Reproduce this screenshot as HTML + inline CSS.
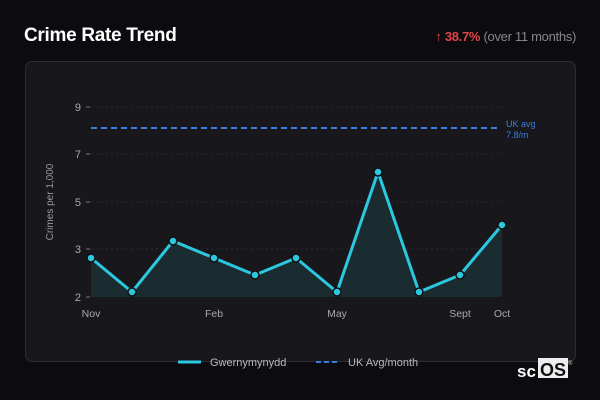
<!DOCTYPE html>
<html><head><style>
body{margin:0;width:600px;height:400px;background:#0c0b10;font-family:"Liberation Sans",sans-serif;overflow:hidden;position:relative}
.t{position:absolute;left:24px;top:25px;color:#fff;font-weight:bold;font-size:19px;letter-spacing:-0.3px}
.r{position:absolute;right:24px;top:29px;font-size:13px;color:#888;letter-spacing:-0.3px}
.r b{color:#e04545}
.card{position:absolute;left:25px;top:61px;width:549px;height:299px;background:#17171c;border:1px solid #2c2c33;border-radius:7px}
svg{position:absolute;left:0;top:0}
</style></head><body>
<div class="t">Crime Rate Trend</div>
<div class="r"><b>↑ 38.7%</b> (over 11 months)</div>
<div class="card"></div>
<svg width="600" height="400" font-family="Liberation Sans, sans-serif">
<g stroke="#2a2a30" stroke-dasharray="2,3" stroke-width="1">
<line x1="91" x2="502" y1="107" y2="107"/><line x1="91" x2="502" y1="154" y2="154"/><line x1="91" x2="502" y1="202" y2="202"/><line x1="91" x2="502" y1="249" y2="249"/></g>
<g stroke="#777"><line x1="86" x2="90" y1="107" y2="107"/><line x1="86" x2="90" y1="154" y2="154"/><line x1="86" x2="90" y1="202" y2="202"/><line x1="86" x2="90" y1="249" y2="249"/><line x1="86" x2="90" y1="297" y2="297"/></g>
<g fill="#aaa" font-size="11" text-anchor="end"><text x="81" y="111">9</text><text x="81" y="158">7</text><text x="81" y="206">5</text><text x="81" y="253">3</text><text x="81" y="301">2</text></g>
<text transform="translate(53,202) rotate(-90)" fill="#999" font-size="10" text-anchor="middle">Crimes per 1,000</text>
<line x1="91" x2="500" y1="128" y2="128" stroke="#3a7de0" stroke-width="2" stroke-dasharray="6,4"/>
<text x="506" y="127" fill="#3a7de0" font-size="9">UK avg</text><text x="506" y="138" fill="#3a7de0" font-size="9">7.8/m</text>
<polygon fill="#1b2c31" points="91,297 91,258 132,292 173,241 214,258 255,275 296,258 337,292 378,172 419,292 460,275 502,225 502,297"/>
<polyline fill="none" stroke="#2cc8e0" stroke-width="3" stroke-linejoin="round" points="91,258 132,292 173,241 214,258 255,275 296,258 337,292 378,172 419,292 460,275 502,225"/>
<g fill="#2cc8e0" stroke="#111" stroke-width="1.5"><circle cx="91" cy="258" r="4"/><circle cx="132" cy="292" r="4"/><circle cx="173" cy="241" r="4"/><circle cx="214" cy="258" r="4"/><circle cx="255" cy="275" r="4"/><circle cx="296" cy="258" r="4"/><circle cx="337" cy="292" r="4"/><circle cx="378" cy="172" r="4"/><circle cx="419" cy="292" r="4"/><circle cx="460" cy="275" r="4"/><circle cx="502" cy="225" r="4"/></g>
<g fill="#aaa" font-size="10.5" text-anchor="middle"><text x="91" y="317">Nov</text><text x="214" y="317">Feb</text><text x="337" y="317">May</text><text x="460" y="317">Sept</text><text x="502" y="317">Oct</text></g>
<line x1="178" x2="201" y1="362" y2="362" stroke="#2cc8e0" stroke-width="3"/>
<text x="210" y="366" fill="#bbb" font-size="11">Gwernymynydd</text>
<line x1="316" x2="340" y1="362" y2="362" stroke="#3a7de0" stroke-width="2" stroke-dasharray="5,3"/>
<text x="348" y="366" fill="#bbb" font-size="11">UK Avg/month</text>
<text x="517" y="377" fill="#fff" font-size="17" font-weight="bold">sc</text>
<rect x="538" y="358" width="30" height="20" fill="#eee"/>
<text x="540" y="376" fill="#111" font-size="18" font-weight="bold">OS</text>
<text x="568" y="365" fill="#ccc" font-size="6">®</text>
</svg>
</body></html>
